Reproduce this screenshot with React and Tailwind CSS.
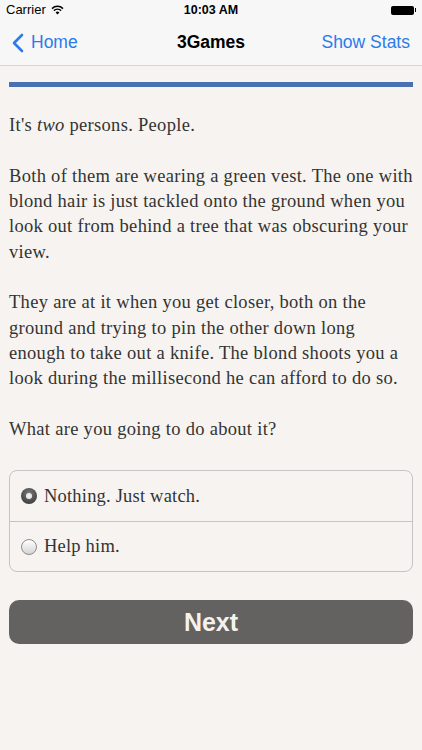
import React, { useState } from 'react';

const serif = { fontFamily: '"Liberation Serif", serif' };

const paragraphs = [
  [
    'Both of them are wearing a green vest. The one with',
    'blond hair is just tackled onto the ground when you',
    'look out from behind a tree that was obscuring your',
    'view.',
  ],
  [
    'They are at it when you get closer, both on the',
    'ground and trying to pin the other down long',
    'enough to take out a knife. The blond shoots you a',
    'look during the millisecond he can afford to do so.',
  ],
  ['What are you going to do about it?'],
];

function Radio({ checked }) {
  return checked ? (
    <span className="w-[16px] h-[16px] rounded-full bg-[radial-gradient(circle_at_50%_35%,#7a7a7a,#2e2e2e)] flex items-center justify-center shrink-0">
      <span className="w-[6px] h-[6px] rounded-full bg-[#ececec]" />
    </span>
  ) : (
    <span className="w-[16px] h-[16px] rounded-full border border-[#8c8c8c] bg-[linear-gradient(#ffffff,#d4d4d4)] shrink-0" />
  );
}

export default function App() {
  const [choice, setChoice] = useState(0);
  const options = ['Nothing. Just watch.', 'Help him.'];

  return (
    <div className="w-[422px] h-[750px] bg-[#f7f3f0] flex flex-col" style={{ fontFamily: '"Liberation Sans", Arial, sans-serif' }}>
      <div className="bg-[#f7f7f7] border-b border-[#d6d6d6]">
        <div className="h-[20px] grid grid-cols-3 items-center px-[6px] text-[13px] text-black">
          <div className="flex items-center gap-[5px]">
            <span>Carrier</span>
            <svg width="13" height="10" viewBox="0 0 13 10">
              <path d="M6.5 9.5 L4.6 7.4 A2.8 2.8 0 0 1 8.4 7.4 Z" fill="#000" />
              <path d="M2.9 5.6 A5.2 5.2 0 0 1 10.1 5.6" stroke="#000" strokeWidth="1.5" fill="none" />
              <path d="M1 3.6 A7.9 7.9 0 0 1 12 3.6" stroke="#000" strokeWidth="1.5" fill="none" />
            </svg>
          </div>
          <span className="font-bold text-[12.5px] text-center">10:03 AM</span>
          <div className="flex items-center justify-end">
            <span className="w-[23px] h-[9px] rounded-[2px] bg-black" />
            <span className="w-[1.5px] h-[4px] bg-black ml-[1px]" />
          </div>
        </div>
        <div className="h-[45px] grid grid-cols-3 items-center px-[12px]">
          <div className="flex items-center gap-[7px] text-[#2b7bea] text-[17.5px]">
            <svg width="12" height="20" viewBox="0 0 12 20">
              <path d="M10 2 L2 10 L10 18" stroke="#2b7bea" strokeWidth="2.6" fill="none" strokeLinecap="round" strokeLinejoin="round" />
            </svg>
            <span>Home</span>
          </div>
          <span className="text-[17.5px] font-bold text-black text-center">3Games</span>
          <span className="text-[17.5px] text-[#2b7bea] text-right">Show Stats</span>
        </div>
      </div>

      <div className="px-[9px] pt-[16px]">
        <div className="h-[5px] bg-[#4a70b4]" />
        <div className="text-[18.5px] leading-[25.35px] tracking-[0.3px] text-[#333333] mt-[26px] whitespace-nowrap" style={serif}>
          <p>It's <i>two</i> persons. People.</p>
          {paragraphs.map((lines, i) => (
            <p key={i} className="mt-[25.35px]">
              {lines.map((l) => (
                <span key={l} className="block">{l}</span>
              ))}
            </p>
          ))}
        </div>

        <div className="mt-[28px] border border-[#c4c4c4] rounded-[8px] overflow-hidden" style={serif}>
          {options.map((o, i) => (
            <div
              key={o}
              onClick={() => setChoice(i)}
              className={`h-[50px] flex items-center gap-[7px] px-[11px] text-[18.5px] tracking-[0.2px] text-[#333333] ${i > 0 ? 'border-t border-[#c4c4c4]' : ''}`}
            >
              <Radio checked={choice === i} />
              <span>{o}</span>
            </div>
          ))}
        </div>

        <button className="mt-[28px] w-full h-[44px] rounded-[10px] bg-[#646260] text-[#f5f2ee] text-[25px] font-bold">
          Next
        </button>
      </div>
    </div>
  );
}
